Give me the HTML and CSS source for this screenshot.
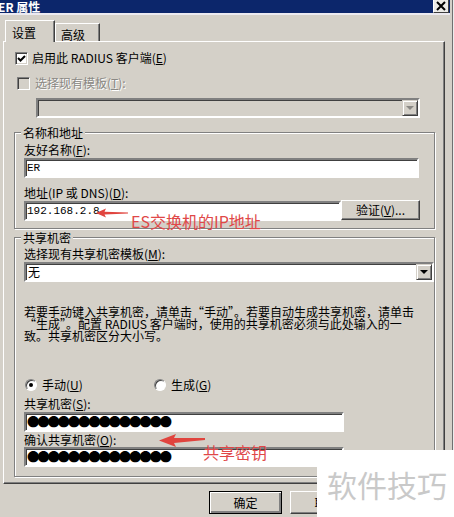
FILE: index.html
```html
<!DOCTYPE html>
<html lang="zh-CN">
<head>
  <meta charset="UTF-8" />
  <title>ER 属性</title>
  <link rel="stylesheet" href="styles.css">
</head>
<body>
  <div class="window">
    <div class="titlebar">
      <span class="title">ER 属性</span>
      <span class="close">
        <svg width="12" height="10" viewBox="0 0 12 10"><path d="M2 1 L10 9 M10 1 L2 9" stroke="#000" stroke-width="2" fill="none"/></svg>
      </span>
    </div>

    <div class="tabs">
      <div class="tab active">设置</div>
      <div class="tab">高级</div>
    </div>

    <div class="panel">
      <div class="check-row">
        <span class="checkbox">
          <svg width="9" height="9" viewBox="0 0 9 9"><path d="M1 4 L3.5 6.5 L8 2" stroke="#000" stroke-width="2" fill="none"/></svg>
        </span>
        <span>启用此 RADIUS 客户端(<u>E</u>)</span>
      </div>

      <div class="check-row disabled">
        <span class="checkbox off"></span>
        <span>选择现有模板(<u>T</u>):</span>
      </div>

      <div class="combo combo-disabled">
        <span class="combo-value"></span>
        <span class="drop-btn"><span class="arrow"></span></span>
      </div>

      <div class="group group-name">
        <div class="group-title">名称和地址</div>
        <div class="label first">友好名称(<u>F</u>):</div>
        <div class="input wide">ER</div>
        <div class="label">地址(IP 或 DNS)(<u>D</u>):</div>
        <div class="input-row">
          <div class="input addr">192.168.2.8</div>
          <div class="btn verify"><span>验证(<u>V</u>)...</span></div>
        </div>
      </div>

      <div class="group group-secret">
        <div class="group-title">共享机密</div>
        <div class="label first">选择现有共享机密模板(<u>M</u>):</div>
        <div class="combo">
          <span class="combo-value">无</span>
          <span class="drop-btn"><span class="arrow"></span></span>
        </div>

        <p class="hint">若要手动键入共享机密，请单击“手动”。若要自动生成共享机密，请单击<br>“生成”。配置 RADIUS 客户端时，使用的共享机密必须与此处输入的一<br>致。共享机密区分大小写。</p>

        <div class="radio-row">
          <span class="radio-item manual"><span class="radio checked"></span><span>手动(<u>U</u>)</span></span>
          <span class="radio-item"><span class="radio"></span><span>生成(<u>G</u>)</span></span>
        </div>

        <div class="label">共享机密(<u>S</u>):</div>
        <div class="input secret"><span class="dots">●●●●●●●●●●●●●●</span></div>
        <div class="label tight">确认共享机密(<u>O</u>):</div>
        <div class="input secret confirm"><span class="dots">●●●●●●●●●●●●●●</span></div>
      </div>
    </div>

    <div class="buttons">
      <div class="btn">确定</div>
      <div class="btn">取消</div>
    </div>
  </div>

  <!-- red notes drawn over the screenshot -->
  <svg class="arrow-ip" width="32" height="10" viewBox="0 0 32 10"><polygon points="0,5 10,0.5 8.5,3.8 32,4.5 32,5.5 8.5,6.4 10,9.5" fill="#e0443e"/></svg>
  <span class="note note-ip">ES交换机的IP地址</span>

  <svg class="arrow-key" width="46" height="14" viewBox="0 0 46 14"><polygon points="0,7.5 17,1 15,5 46,5 46,7 15,10 17,14" fill="#e0443e"/></svg>
  <span class="note note-key">共享密钥</span>

  <div class="watermark">软件技巧</div>
</body>
</html>
```

FILE: styles.css
```css
* {
  box-sizing: border-box;
}

body {
  margin: 0;
  width: 454px;
  height: 517px;
  overflow: hidden;
  position: relative;
  background: #d4d0c8;
  font-family: "Noto Sans CJK SC", sans-serif;
  font-size: 12px;
  line-height: 14px;
  color: #000;
}

u {
  text-decoration: underline;
  text-underline-offset: 1px;
}

.window {
  width: 454px;
  height: 517px;
  box-shadow: inset -1px 0 #ececec, inset -2px 0 #707070;
}

/* title bar */
.titlebar {
  display: flex;
  align-items: flex-start;
  width: 450px;
  height: 15px;
  padding-right: 1px;
  background: #0c266b;
  border-bottom: 2px solid #eceaf0;
  color: #fff;
  font-weight: bold;
  line-height: 13px;
}

.title {
  margin-left: -2px;
}

.close {
  display: flex;
  align-items: center;
  justify-content: center;
  margin-left: auto;
  width: 16px;
  height: 14px;
  margin-top: -1px;
  background: #ecebe7;
  border: 1px solid;
  border-color: #fff #404040 #404040 #fff;
}

/* tabs */
.tabs {
  display: flex;
  align-items: flex-end;
  height: 26px;
  padding-left: 5px;
}

.tab {
  height: 18px;
  width: 45px;
  padding: 4px 0 0 5px;
  border: 1px solid;
  border-bottom: none;
  border-color: #fff #404040 transparent #fff;
  box-shadow: inset -1px 0 #808080;
}

.tab.active {
  position: relative;
  z-index: 1;
  width: 50px;
  height: 22px;
  margin-bottom: -1px;
  padding: 5px 0 0 6px;
  background: #d4d0c8;
}

.panel {
  width: 442px;
  height: 443px;
  margin-left: 3px;
  border: 1px solid;
  border-color: #fff #404040 #404040 #fff;
  box-shadow: inset -1px -1px #808080;
  padding-top: 9px;
}

/* checkboxes */
.check-row {
  display: flex;
  align-items: center;
  gap: 4px;
  height: 14px;
  padding-left: 11px;
}

.check-row.disabled {
  margin-top: 11px;
  padding-left: 13px;
  gap: 5px;
  color: #8a8884;
  text-shadow: 1px 1px #fff;
}

.checkbox {
  display: flex;
  align-items: center;
  justify-content: center;
  width: 13px;
  height: 13px;
  background: #fff;
  border: 1px solid;
  border-color: #808080 #fff #fff #808080;
  box-shadow: inset 1px 1px #404040, inset -1px -1px #d4d0c8;
}

.checkbox.off {
  background: #d4d0c8;
}

/* combo boxes */
.combo {
  display: flex;
  align-items: center;
  height: 20px;
  margin-top: 1px;
  background: #fff;
  border: 2px solid;
  border-color: #808080 #fff #fff #808080;
  box-shadow: inset 1px 1px #404040;
}

.combo-disabled {
  width: 384px;
  margin: 8px 0 0 32px;
  background: #d4d0c8;
}

.combo-value {
  flex: 1;
  padding-left: 2px;
  line-height: 16px;
}

.drop-btn {
  display: flex;
  align-items: center;
  justify-content: center;
  width: 16px;
  height: 16px;
  background: #d4d0c8;
  border: 1px solid;
  border-color: #d4d0c8 #404040 #404040 #d4d0c8;
  box-shadow: inset 1px 1px #fff, inset -1px -1px #808080;
}

.arrow {
  width: 0;
  height: 0;
  border-left: 4px solid transparent;
  border-right: 4px solid transparent;
  border-top: 4px solid #000;
}

.combo-disabled .arrow {
  border-top-color: #8a8884;
}

/* group boxes */
.group {
  width: 421px;
  margin-left: 10px;
  padding: 0 0 7px 9px;
  border: 1px solid #808080;
  box-shadow: inset 1px 1px #fff, 1px 1px #fff;
}

.group-name {
  margin-top: 14px;
}

.group-secret {
  margin-top: 8px;
  padding-bottom: 9px;
}

.group-title {
  width: fit-content;
  margin: -7px 0 0 -3px;
  padding: 0 2px;
  background: #d4d0c8;
}

.label {
  margin-top: 8px;
}

.label.first {
  margin-top: 3px;
}

.group-secret .label.first {
  margin-top: 2px;
}

.group-secret .label {
  margin-top: 5px;
}

.group-secret .label.tight {
  margin-top: 1px;
}

.input {
  height: 20px;
  margin-top: 1px;
  padding-left: 1px;
  background: #fff;
  border: 2px solid;
  border-color: #808080 #fff #fff #808080;
  box-shadow: inset 1px 1px #404040;
  font-family: "Liberation Mono", monospace;
  font-size: 11px;
  line-height: 16px;
}

.input.wide {
  width: 395px;
}

.input-row {
  display: flex;
  align-items: flex-start;
  margin-top: 1px;
}

.input.addr {
  width: 317px;
  margin-top: 0;
}

.input.secret {
  width: 320px;
}

.input.confirm {
  margin-top: 0;
}

.dots {
  font-family: "Noto Sans CJK SC", sans-serif;
  font-size: 12.5px;
  letter-spacing: -2.3px;
  line-height: 16px;
}

/* buttons */
.btn {
  display: flex;
  align-items: center;
  justify-content: center;
  width: 73px;
  height: 23px;
  background: #d4d0c8;
  border: 1px solid;
  border-color: #fff #404040 #404040 #fff;
  box-shadow: inset -1px -1px #808080;
}

.btn.verify {
  width: 79px;
  height: 20px;
  margin-top: -1px;
}

.buttons {
  display: flex;
  gap: 8px;
  margin-top: 7px;
  padding-left: 209px;
}

.buttons .btn:first-child {
  border-color: #000;
  box-shadow: inset 1px 1px #fff, inset -2px -2px #808080;
}

/* shared secret text and radios */
.hint {
  margin: 24px 0 0;
  white-space: nowrap;
  line-height: 12px;
}

.radio-row {
  display: flex;
  align-items: center;
  height: 14px;
  margin-top: 36px;
  padding-left: 1px;
}

.radio-item {
  display: flex;
  align-items: center;
  gap: 5px;
}

.radio-item.manual {
  width: 129px;
}

.radio {
  position: relative;
  width: 12px;
  height: 12px;
  border-radius: 50%;
  background: #fff;
  border: 1px solid;
  border-color: #808080 #fff #fff #808080;
  box-shadow: inset 1px 1px #404040;
}

.radio.checked::after {
  content: "";
  position: absolute;
  left: 3px;
  top: 3px;
  width: 4px;
  height: 4px;
  border-radius: 50%;
  background: #000;
}

/* annotations over the screenshot */
.note {
  position: absolute;
  font-size: 16px;
  line-height: 18px;
  color: #e04848;
}

.note-ip {
  left: 131px;
  top: 212px;
}

.note-key {
  left: 203px;
  top: 443px;
}

.arrow-ip {
  position: absolute;
  left: 96px;
  top: 208px;
}

.arrow-key {
  position: absolute;
  left: 159px;
  top: 433px;
}

.watermark {
  position: absolute;
  right: 0;
  bottom: 0;
  width: 137px;
  height: 67px;
  display: flex;
  align-items: center;
  padding-left: 10px;
  background: #fff;
  color: #c9c9c9;
  font-size: 30px;
}
```
